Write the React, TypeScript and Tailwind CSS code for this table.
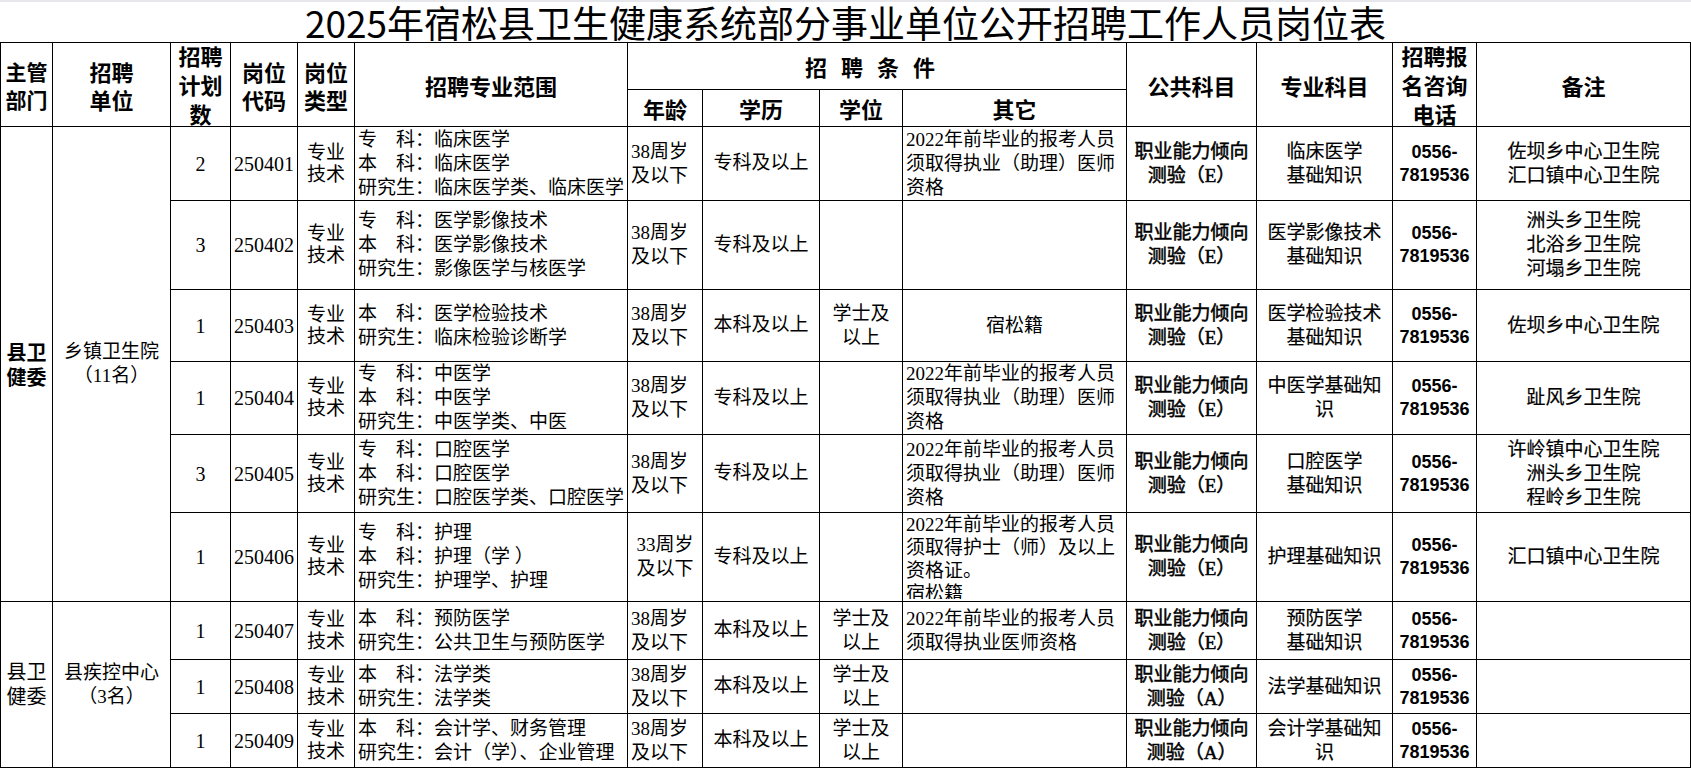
import * as React from "react";

const serif = "font-['Liberation_Serif','Noto_Sans_CJK_SC',serif]";
const head = "font-['Noto_Sans_CJK_SC',sans-serif] font-bold text-[22px]";
const td = "border border-black p-0 align-middle";

type Row = {
  h: string;
  count: string;
  code: string;
  major: string[];
  age: string[];
  ageCenter?: boolean;
  edu: string;
  degree?: string[];
  other?: string[];
  otherMode?: "center" | "clip";
  pub: string;
  prof: string[];
  note: string[];
};

const AGE38 = ["38周岁", "及以下"];
const ZHULI = ["2022年前毕业的报考人员", "须取得执业（助理）医师", "资格"];

const group1: Row[] = [
  {
    h: "h-[74px]",
    count: "2",
    code: "250401",
    major: ["专　科：临床医学", "本　科：临床医学", "研究生：临床医学类、临床医学"],
    age: AGE38,
    edu: "专科及以上",
    other: ZHULI,
    pub: "E",
    prof: ["临床医学", "基础知识"],
    note: ["佐坝乡中心卫生院", "汇口镇中心卫生院"],
  },
  {
    h: "h-[89px]",
    count: "3",
    code: "250402",
    major: ["专　科：医学影像技术", "本　科：医学影像技术", "研究生：影像医学与核医学"],
    age: AGE38,
    edu: "专科及以上",
    pub: "E",
    prof: ["医学影像技术", "基础知识"],
    note: ["洲头乡卫生院", "北浴乡卫生院", "河塌乡卫生院"],
  },
  {
    h: "h-[72px]",
    count: "1",
    code: "250403",
    major: ["本　科：医学检验技术", "研究生：临床检验诊断学"],
    age: AGE38,
    edu: "本科及以上",
    degree: ["学士及", "以上"],
    other: ["宿松籍"],
    otherMode: "center",
    pub: "E",
    prof: ["医学检验技术", "基础知识"],
    note: ["佐坝乡中心卫生院"],
  },
  {
    h: "h-[72px]",
    count: "1",
    code: "250404",
    major: ["专　科：中医学", "本　科：中医学", "研究生：中医学类、中医"],
    age: AGE38,
    edu: "专科及以上",
    other: ZHULI,
    pub: "E",
    prof: ["中医学基础知", "识"],
    note: ["趾风乡卫生院"],
  },
  {
    h: "h-[78px]",
    count: "3",
    code: "250405",
    major: ["专　科：口腔医学", "本　科：口腔医学", "研究生：口腔医学类、口腔医学"],
    age: AGE38,
    edu: "专科及以上",
    other: ZHULI,
    pub: "E",
    prof: ["口腔医学", "基础知识"],
    note: ["许岭镇中心卫生院", "洲头乡卫生院", "程岭乡卫生院"],
  },
  {
    h: "h-[89px]",
    count: "1",
    code: "250406",
    major: ["专　科：护理", "本　科：护理（学 ）", "研究生：护理学、护理"],
    age: ["33周岁", "及以下"],
    ageCenter: true,
    edu: "专科及以上",
    other: ["2022年前毕业的报考人员", "须取得护士（师）及以上", "资格证。", "宿松籍"],
    otherMode: "clip",
    pub: "E",
    prof: ["护理基础知识"],
    note: ["汇口镇中心卫生院"],
  },
];

const group2: Row[] = [
  {
    h: "h-[58px]",
    count: "1",
    code: "250407",
    major: ["本　科：预防医学", "研究生：公共卫生与预防医学"],
    age: AGE38,
    edu: "本科及以上",
    degree: ["学士及", "以上"],
    other: ["2022年前毕业的报考人员", "须取得执业医师资格"],
    pub: "E",
    prof: ["预防医学", "基础知识"],
    note: [],
  },
  {
    h: "h-[54px]",
    count: "1",
    code: "250408",
    major: ["本　科：法学类", "研究生：法学类"],
    age: AGE38,
    edu: "本科及以上",
    degree: ["学士及", "以上"],
    pub: "A",
    prof: ["法学基础知识"],
    note: [],
  },
  {
    h: "h-[54px]",
    count: "1",
    code: "250409",
    major: ["本　科：会计学、财务管理", "研究生：会计（学）、企业管理"],
    age: AGE38,
    edu: "本科及以上",
    degree: ["学士及", "以上"],
    pub: "A",
    prof: ["会计学基础知", "识"],
    note: [],
  },
];

function Lines({ items }: { items: string[] }) {
  return (
    <>
      {items.map((t, i) => (
        <div key={i} className="whitespace-nowrap">
          {t}
        </div>
      ))}
    </>
  );
}

function DataRow({ row, lead }: { row: Row; lead?: React.ReactNode }) {
  return (
    <tr className={row.h}>
      {lead}
      <td className={`${td} text-center text-[20px]`}>{row.count}</td>
      <td className={`${td} text-center text-[20px]`}>{row.code}</td>
      <td className={`${td} text-center text-[19px] leading-[22px]`}>
        <Lines items={["专业", "技术"]} />
      </td>
      <td className={`${td} pl-[3px] text-left text-[19px] leading-[24px]`}>
        <Lines items={row.major} />
      </td>
      <td
        className={`${td} text-[19px] leading-[24px] ${
          row.ageCenter ? "text-center" : "pl-[3px] text-left"
        }`}
      >
        <Lines items={row.age} />
      </td>
      <td className={`${td} text-center text-[19px]`}>{row.edu}</td>
      <td className={`${td} text-center text-[19px] leading-[24px]`}>
        {row.degree && <Lines items={row.degree} />}
      </td>
      {row.otherMode === "clip" ? (
        <td className={`${td} align-top text-[19px] leading-[23px]`}>
          <div className="h-[86px] overflow-hidden pl-[3px]">
            <Lines items={row.other ?? []} />
          </div>
        </td>
      ) : (
        <td
          className={`${td} text-[19px] leading-[24px] ${
            row.otherMode === "center" ? "text-center" : "pl-[3px] text-left"
          }`}
        >
          {row.other && <Lines items={row.other} />}
        </td>
      )}
      <td
        className={`${td} text-center text-[19px] leading-[24px] [-webkit-text-stroke:0.5px_black]`}
      >
        <div>职业能力倾向</div>
        <div>测验（{row.pub}）</div>
      </td>
      <td className={`${td} text-center text-[19px] leading-[24px] [-webkit-text-stroke:0.2px_black]`}>
        <Lines items={row.prof} />
      </td>
      <td
        className={`${td} text-center font-['Liberation_Sans',sans-serif] text-[18px] font-bold leading-[23px]`}
      >
        <div>0556-</div>
        <div>7819536</div>
      </td>
      <td className={`${td} text-center text-[19px] leading-[24px] [-webkit-text-stroke:0.2px_black]`}>
        <Lines items={row.note} />
      </td>
    </tr>
  );
}

function Head({
  lines,
  rowSpan,
  colSpan,
  size = "text-[22px]",
}: {
  lines: string[];
  rowSpan?: number;
  colSpan?: number;
  size?: string;
}) {
  return (
    <td rowSpan={rowSpan} colSpan={colSpan} className={`${td} text-center`}>
      <div
        className={`font-['Noto_Sans_CJK_SC',sans-serif] font-bold ${size} leading-[28px]`}
      >
        <Lines items={lines} />
      </div>
    </td>
  );
}

export default function App() {
  return (
    <div className={`min-h-[768px] w-[1691px] bg-white text-black ${serif}`}>
      <div className="flex h-[42px] items-center justify-center border-t-2 border-gray-200 font-['Noto_Sans_CJK_SC',sans-serif] text-[37px] leading-[40px]">
        2025年宿松县卫生健康系统部分事业单位公开招聘工作人员岗位表
      </div>
      <table className="w-[1690px] table-fixed border-collapse">
        <colgroup>
          <col className="w-[52px]" />
          <col className="w-[118px]" />
          <col className="w-[60px]" />
          <col className="w-[67px]" />
          <col className="w-[57px]" />
          <col className="w-[273px]" />
          <col className="w-[75px]" />
          <col className="w-[117px]" />
          <col className="w-[83px]" />
          <col className="w-[224px]" />
          <col className="w-[130px]" />
          <col className="w-[136px]" />
          <col className="w-[84px]" />
          <col className="w-[214px]" />
        </colgroup>
        <tbody>
          <tr className="h-[47px]">
            <Head lines={["主管", "部门"]} rowSpan={2} size="text-[21px]" />
            <Head lines={["招聘", "单位"]} rowSpan={2} />
            <td rowSpan={2} className={`${td} text-center`}>
              <div className={`${head} flex h-[83px] flex-col items-center justify-center overflow-hidden leading-[29px]`}>
                <div>招聘</div>
                <div>计划</div>
                <div>数</div>
              </div>
            </td>
            <Head lines={["岗位", "代码"]} rowSpan={2} />
            <Head lines={["岗位", "类型"]} rowSpan={2} />
            <Head lines={["招聘专业范围"]} rowSpan={2} />
            <td colSpan={4} className={`${td} text-center`}>
              <span className={`${head} tracking-[14px]`}>招聘条件</span>
            </td>
            <Head lines={["公共科目"]} rowSpan={2} />
            <Head lines={["专业科目"]} rowSpan={2} />
            <td rowSpan={2} className={`${td} text-center`}>
              <div className={`${head} flex h-[83px] flex-col items-center justify-center overflow-hidden leading-[29px]`}>
                <div>招聘报</div>
                <div>名咨询</div>
                <div>电话</div>
              </div>
            </td>
            <Head lines={["备注"]} rowSpan={2} />
          </tr>
          <tr className="h-[37px]">
            <Head lines={["年龄"]} />
            <Head lines={["学历"]} />
            <Head lines={["学位"]} />
            <Head lines={["其它"]} />
          </tr>
          {group1.map((row, i) => (
            <DataRow
              key={row.code}
              row={row}
              lead={
                i === 0 ? (
                  <>
                    <td rowSpan={6} className={`${td} text-center`}>
                      <div className="font-['Noto_Sans_CJK_SC',sans-serif] text-[20px] font-bold leading-[25px]">
                        <div>县卫</div>
                        <div>健委</div>
                      </div>
                    </td>
                    <td rowSpan={6} className={`${td} text-center text-[19px] leading-[24px]`}>
                      <div>乡镇卫生院</div>
                      <div>（11名）</div>
                    </td>
                  </>
                ) : null
              }
            />
          ))}
          {group2.map((row, i) => (
            <DataRow
              key={row.code}
              row={row}
              lead={
                i === 0 ? (
                  <>
                    <td rowSpan={3} className={`${td} text-center text-[20px] leading-[25px]`}>
                      <div>县卫</div>
                      <div>健委</div>
                    </td>
                    <td rowSpan={3} className={`${td} text-center text-[19px] leading-[24px]`}>
                      <div>县疾控中心</div>
                      <div>（3名）</div>
                    </td>
                  </>
                ) : null
              }
            />
          ))}
        </tbody>
      </table>
    </div>
  );
}
